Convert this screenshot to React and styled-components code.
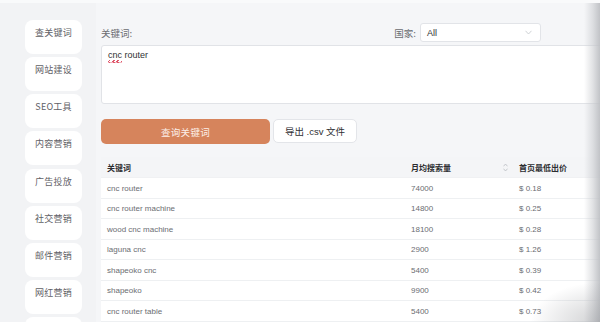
import React from "react";
import styled, { createGlobalStyle } from "styled-components";

const Global = createGlobalStyle`
  html, body { margin: 0; padding: 0; background: #f2f3f5; }
  body { width: 600px; height: 322px; overflow: hidden; font-family: "Liberation Sans", "Noto Sans CJK SC", sans-serif; }
  * { box-sizing: border-box; }
`;

const Page = styled.div`
  position: relative;
  width: 600px;
  height: 322px;
  overflow: hidden;
  display: flex;
  border-top: 3px solid #f9fafb;
  background: #f2f3f5;
`;

const Sidebar = styled.nav`
  flex: 0 0 96px;
  display: flex;
  flex-direction: column;
  gap: 3.15px;
  padding: 17px 0 0 25px;
`;

const NavCard = styled.div`
  width: 57px;
  height: 34px;
  flex: 0 0 34px;
  background: #ffffff;
  border-radius: 8px;
  display: flex;
  justify-content: center;
  padding-top: 8px;
  font-size: 9px;
  line-height: 10px;
  color: #5f6166;
  font-family: "Noto Sans CJK SC", sans-serif;
  letter-spacing: 0.2px;
`;

const Main = styled.main`
  flex: 0 0 504px;
  min-width: 0;
  background: #f5f6f8;
  padding: 20px 0 0 5px;
  display: flex;
  flex-direction: column;
`;

const LabelRow = styled.div`
  display: flex;
  align-items: center;
  justify-content: space-between;
  height: 19px;
  padding-right: 59px;
`;

const Label = styled.span`
  font-family: "Noto Sans CJK SC", sans-serif;
  font-size: 9.5px;
  color: #6a6c70;
  line-height: 12px;
`;

const CountryGroup = styled.div`
  display: flex;
  align-items: center;
  gap: 4px;
`;

const Select = styled.div`
  width: 121px;
  height: 19px;
  background: #fff;
  border: 1px solid #e2e4e8;
  border-radius: 3px;
  display: flex;
  align-items: center;
  justify-content: space-between;
  padding: 0 8px 0 6px;
  font-size: 9px;
  color: #303133;
`;

const TextBox = styled.div`
  margin-top: 3px;
  height: 59px;
  width: 510px;
  flex: 0 0 59px;
  background: #fff;
  border: 1px solid #e1e3e7;
  border-radius: 3px;
  padding: 3px 6px;
  font-size: 9px;
  line-height: 12px;
  color: #303133;
`;

const Misspelled = styled.span`
  position: relative;
  &::after {
    content: "";
    position: absolute;
    left: 0;
    right: 0;
    bottom: -3px;
    height: 2px;
    background: repeating-linear-gradient(135deg, transparent 0 1px, #e0566a 1px 2px, transparent 2px 3px);
    border-bottom: 1px solid rgba(224, 86, 106, 0.45);
  }
`;

const ButtonRow = styled.div`
  display: flex;
  align-items: flex-start;
  gap: 3px;
  margin-top: 15px;
`;

const PrimaryButton = styled.button`
  width: 169px;
  height: 25px;
  border: none;
  border-radius: 5px;
  background: #d6845c;
  color: #fcefe8;
  font-family: "Noto Sans CJK SC", sans-serif;
  font-size: 9.5px;
  letter-spacing: 0.3px;
  padding: 0;
`;

const GhostButton = styled.button`
  width: 84px;
  height: 24px;
  border: 1px solid #e3e5e9;
  border-radius: 5px;
  background: #fff;
  color: #2f3033;
  font-family: "Liberation Sans", "Noto Sans CJK SC", sans-serif;
  font-size: 9.5px;
  padding: 0;
`;

const Table = styled.div`
  margin-top: 13px;
  width: 510px;
  display: flex;
  flex-direction: column;
`;

const Row = styled.div`
  display: grid;
  grid-template-columns: 304px 108px 1fr;
  height: ${(p) => (p.$head ? "21px" : "20.5px")};
  flex: 0 0 ${(p) => (p.$head ? "21px" : "20.5px")};
  align-items: center;
  background: ${(p) => (p.$head ? "#f4f5f7" : "#ffffff")};
  border-bottom: 1px solid ${(p) => (p.$head ? "#f0f1f3" : "#eef0f2")};
  font-size: 8px;
  color: ${(p) => (p.$head ? "#2c2d30" : "#6b6d72")};
  font-weight: ${(p) => (p.$head ? 700 : 400)};
  font-family: ${(p) => (p.$head ? `"Noto Sans CJK SC", sans-serif` : `"Liberation Sans", sans-serif`)};
  padding-top: ${(p) => (p.$head ? "0" : "1px")};
`;

const Cell = styled.div`
  padding-left: 6px;
  display: flex;
  align-items: center;
  justify-content: space-between;
  padding-right: ${(p) => (p.$sort ? "5px" : "0")};
`;

const EdgeShade = styled.div`
  position: absolute;
  top: 0;
  right: 0;
  width: 16px;
  height: 100%;
  pointer-events: none;
  background: linear-gradient(90deg, rgba(200, 202, 206, 0) 0%, rgba(200, 202, 206, 0.55) 55%, rgba(190, 192, 196, 0.95) 100%);
`;

const CornerShade = styled.div`
  position: absolute;
  right: 0;
  bottom: 0;
  width: 70px;
  height: 40px;
  pointer-events: none;
  background: radial-gradient(ellipse at 100% 100%, rgba(150, 152, 156, 0.45) 0%, rgba(150, 152, 156, 0) 70%);
`;

const Chevron = () => (
  <svg width="7" height="5" viewBox="0 0 7 5">
    <path d="M0.5 0.8 L3.5 4 L6.5 0.8" fill="none" stroke="#c3c6cc" strokeWidth="0.8" />
  </svg>
);

const SortIcon = () => (
  <svg width="5" height="9" viewBox="0 0 5 9">
    <path d="M0.5 3.3 L2.5 1 L4.5 3.3" fill="none" stroke="#b9bcc2" strokeWidth="0.8" />
    <path d="M0.5 5.7 L2.5 8 L4.5 5.7" fill="none" stroke="#b9bcc2" strokeWidth="0.8" />
  </svg>
);

const navItems = ["查关键词", "网站建设", "SEO工具", "内容营销", "广告投放", "社交营销", "邮件营销", "网红营销", ""];

const rows = [
  ["cnc router", "74000", "$ 0.18"],
  ["cnc router machine", "14800", "$ 0.25"],
  ["wood cnc machine", "18100", "$ 0.28"],
  ["laguna cnc", "2900", "$ 1.26"],
  ["shapeoko cnc", "5400", "$ 0.39"],
  ["shapeoko", "9900", "$ 0.42"],
  ["cnc router table", "5400", "$ 0.73"],
];

export default function App() {
  return (
    <>
      <Global />
      <Page>
        <Sidebar>
          {navItems.map((n, i) => (
            <NavCard key={i}>{n}</NavCard>
          ))}
        </Sidebar>
        <Main>
          <LabelRow>
            <Label>关键词:</Label>
            <CountryGroup>
              <Label>国家:</Label>
              <Select>
                <span>All</span>
                <Chevron />
              </Select>
            </CountryGroup>
          </LabelRow>
          <TextBox>
            <Misspelled>cnc</Misspelled> router
          </TextBox>
          <ButtonRow>
            <PrimaryButton>查询关键词</PrimaryButton>
            <GhostButton>导出 .csv 文件</GhostButton>
          </ButtonRow>
          <Table>
            <Row $head>
              <Cell>关键词</Cell>
              <Cell $sort>
                <span>月均搜索量</span>
                <SortIcon />
              </Cell>
              <Cell>首页最低出价</Cell>
            </Row>
            {rows.map((r) => (
              <Row key={r[0]}>
                <Cell>{r[0]}</Cell>
                <Cell>{r[1]}</Cell>
                <Cell>{r[2]}</Cell>
              </Row>
            ))}
          </Table>
        </Main>
        <EdgeShade />
        <CornerShade />
      </Page>
    </>
  );
}
